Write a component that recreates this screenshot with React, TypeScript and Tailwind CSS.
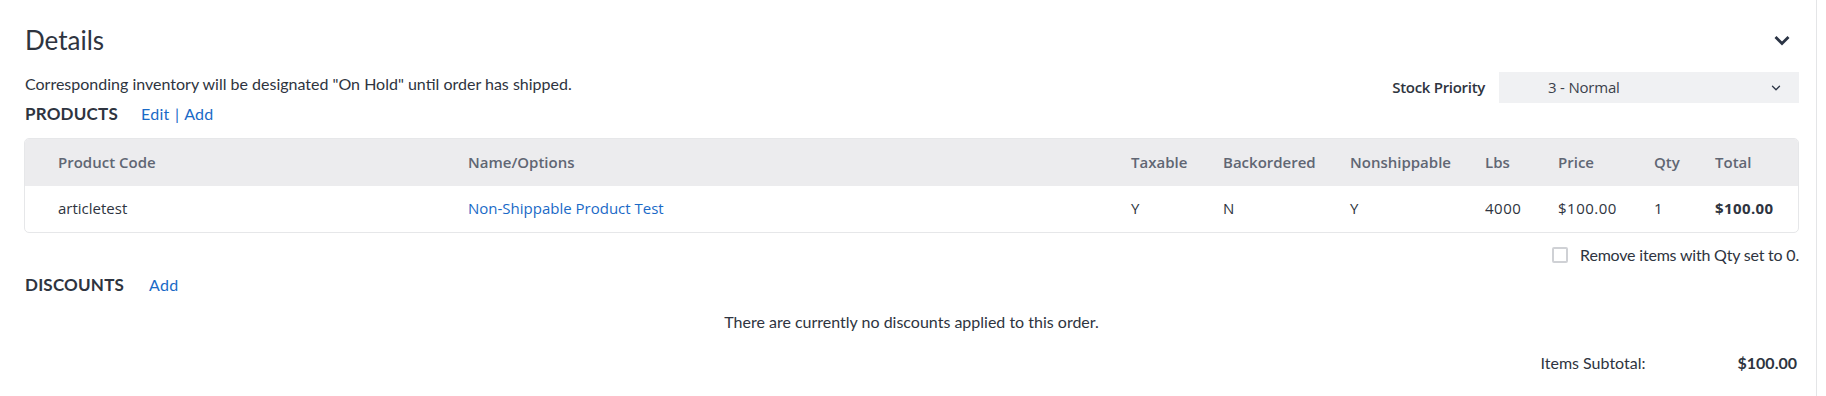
import { ChevronDown } from "lucide-react";

const columns = [
  { label: "Product Code", w: "w-[410px]" },
  { label: "Name/Options", w: "w-[663px]" },
  { label: "Taxable", w: "w-[92px]" },
  { label: "Backordered", w: "w-[127px]" },
  { label: "Nonshippable", w: "w-[135px]" },
  { label: "Lbs", w: "w-[73px]" },
  { label: "Price", w: "w-[96px]" },
  { label: "Qty", w: "w-[61px]" },
  { label: "Total", w: "flex-1" },
];

const row = ["articletest", "Non-Shippable Product Test", "Y", "N", "Y", "4000", "$100.00", "1", "$100.00"];

function cellClass(i: number) {
  if (i === 1) return "text-[#1a6ac7]";
  if (i === 8) return "font-bold text-[#2e3440] tracking-[0.4px]";
  if (i >= 5) return "text-[#2e3440] tracking-[0.5px]";
  return "text-[#2e3440]";
}

export default function App() {
  return (
    <div className="w-[1817px] h-[396px] bg-white border-r border-[#e4e5e7] pl-6 pr-[17px] text-[#2e3440] font-['Lato',sans-serif]">
      {/* Title */}
      <div className="flex items-center justify-between pt-[18px] h-[62px]">
        <h2 className="text-[26px] leading-[32px] pl-px">Details</h2>
        <svg className="w-4 h-[11px] mr-[9px] mt-[1px]" viewBox="0 0 16 11" fill="none">
          <path d="M1.5 2 L8 8.5 L14.5 2" stroke="#2b3445" strokeWidth="2.8" />
        </svg>
      </div>

      {/* Notice + stock priority */}
      <div className="flex justify-between">
        <div>
          <p className="text-[16px] leading-5 mt-[12px] pl-px">
            Corresponding inventory will be designated "On Hold" until order has shipped.
          </p>
          <div className="flex items-center mt-[7px] pl-px">
            <span className="text-[17px] font-bold tracking-[0.2px]">PRODUCTS</span>
            <span className="ml-[23px] text-[16px] text-[#1a6ac7] tracking-[0.3px]">
              Edit <span className="mx-[1px]">|</span> Add
            </span>
          </div>
        </div>
        <div className="flex items-center h-[31px] mt-[10px]">
          <span className="text-[15px] font-semibold mr-[14px] font-['Open_Sans',sans-serif] tracking-[-0.3px]">
            Stock Priority
          </span>
          <div className="w-[300px] h-[31px] bg-[#f0f1f3] flex items-center justify-between pl-[49px] pr-4 font-['Open_Sans',sans-serif] text-[15px] text-[#3b414b] tracking-[-0.2px]">
            <span>3 - Normal</span>
            <ChevronDown className="w-[14px] h-[14px] text-[#2b3445]" strokeWidth={2.2} />
          </div>
        </div>
      </div>

      {/* Products table */}
      <div className="mt-[11px] border border-[#e6e7e9] rounded-[5px] overflow-hidden font-['Open_Sans',sans-serif] text-[15px]">
        <div className="flex items-center h-[47px] bg-[#ececee] pl-[33px] text-[#606673] font-semibold">
          {columns.map((c) => (
            <div key={c.label} className={c.w}>
              {c.label}
            </div>
          ))}
        </div>
        <div className="flex items-center h-[46px] pl-[33px]">
          {row.map((v, i) => (
            <div key={i} className={`${columns[i].w} ${cellClass(i)}`}>
              {v}
            </div>
          ))}
        </div>
      </div>

      {/* Remove items */}
      <div className="flex justify-end items-center mt-[14px] h-4">
        <label className="flex items-center text-[16px] tracking-[-0.2px]">
          <span className="w-4 h-4 border-2 border-[#cfd1d5] rounded-[2px] mr-3 bg-white" />
          Remove items with Qty set to 0.
        </label>
      </div>

      {/* Discounts */}
      <div className="flex items-center mt-[12px] h-[20px] pl-px">
        <span className="text-[17px] font-bold tracking-[0.2px]">DISCOUNTS</span>
        <span className="ml-[25px] text-[16px] text-[#1a6ac7] tracking-[0.3px]">Add</span>
      </div>
      <p className="text-center text-[16px] leading-5 mt-[17px]">
        There are currently no discounts applied to this order.
      </p>

      {/* Subtotal */}
      <div className="flex justify-end items-center mt-[19px] text-[16px] pr-[2px]">
        <span className="w-[197px]">Items Subtotal:</span>
        <span className="font-bold">$100.00</span>
      </div>
    </div>
  );
}
